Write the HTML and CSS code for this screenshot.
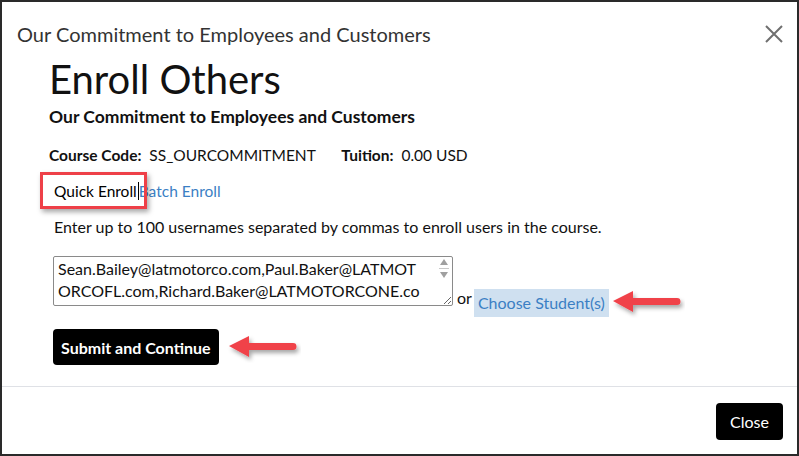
FILE: index.html
```html
<!DOCTYPE html>
<html lang="en">
<head>
    <meta charset="UTF-8">
    <meta name="viewport" content="width=device-width, initial-scale=1.0">
    <title>Enroll Others</title>
    <link rel="stylesheet" href="styles.css">
</head>
<body>
    <div class="modal">
        <div class="modal-header">
            <h4 class="modal-title">Our Commitment to Employees and Customers</h4>
            <span class="close-x">
                <svg width="18" height="18" viewBox="0 0 18 18"><path d="M1 1 L17 17 M17 1 L1 17" stroke="#6f6f6f" stroke-width="2" fill="none"/></svg>
            </span>
        </div>
        <div class="modal-body">
            <h1>Enroll Others</h1>
            <h2>Our Commitment to Employees and Customers</h2>
            <div class="course-info">
                <b>Course Code:</b>&nbsp; SS_OURCOMMITMENT
                <b class="tuition">Tuition:</b>&nbsp; 0.00 USD
            </div>
            <div class="tabs">
                <span class="tab active">Quick Enroll<span class="caret"></span></span><a class="tab" href="#">Batch Enroll</a>
                <span class="mark mark-box"></span>
            </div>
            <p class="hint">Enter up to 100 usernames separated by commas to enroll users in the course.</p>
            <div class="pick-row">
                <div class="users-wrap">
                    <textarea class="users" rows="2">Sean.Bailey@latmotorco.com,Paul.Baker@LATMOTORCOFL.com,Richard.Baker@LATMOTORCONE.com</textarea>
                    <span class="scroll-bar">
                        <svg width="10" height="8" viewBox="0 0 10 8"><path d="M1 7 L5 1 L9 7 Z" fill="#a0a0a0"/></svg>
                        <i class="scroll-line"></i>
                        <svg width="10" height="8" viewBox="0 0 10 8"><path d="M1 1 L5 7 L9 1 Z" fill="#a0a0a0"/></svg>
                    </span>
                </div>
                <span class="or">or</span>
                <a class="choose" href="#">Choose Student(s)</a>
                <svg class="mark arrow-a" width="76" height="30" viewBox="0 0 76 30"><use href="#arrow"/></svg>
            </div>
            <div class="submit-row">
                <button class="btn">Submit and Continue</button>
                <svg class="mark arrow-b" width="76" height="30" viewBox="0 0 76 30"><use href="#arrow"/></svg>
            </div>
        </div>
        <div class="modal-footer">
            <button class="btn btn-close">Close</button>
        </div>
    </div>

    <svg width="0" height="0" class="defs">
        <defs>
            <filter id="shade" x="-20%" y="-30%" width="150%" height="180%">
                <feDropShadow dx="2" dy="3" stdDeviation="2" flood-color="#000" flood-opacity="0.35"/>
            </filter>
            <g id="arrow" filter="url(#shade)">
                <path d="M4 13 L24 3 L24 10 L68 10 A3 3 0 0 1 68 17 L24 17 L24 24 Z" fill="#f0424a"/>
            </g>
        </defs>
    </svg>
</body>
</html>
```

FILE: styles.css
```css
body {
    margin: 0;
    font-family: Lato, "Liberation Sans", sans-serif;
    color: #111;
}

.modal {
    box-sizing: border-box;
    width: 799px;
    height: 456px;
    border: 2px solid #2a2a2a;
    background: #fff;
    display: flex;
    flex-direction: column;
}

.modal-header {
    display: flex;
    justify-content: space-between;
    align-items: center;
    padding: 20px 14px 0 15px;
}

.modal-title {
    margin: 0;
    font-size: 20px;
    font-weight: normal;
    color: #333;
}

.close-x {
    display: flex;
}

.modal-body {
    padding: 9px 0 0 47px;
    flex: 1;
    border-bottom: 1px solid #dfe1e6;
}

h1 {
    margin: 0;
    font-size: 40px;
    font-weight: normal;
    line-height: 48px;
}

h2 {
    margin: 3px 0 0;
    font-size: 17.5px;
    font-weight: bold;
}

.course-info {
    margin-top: 19px;
    font-size: 15.5px;
}

.tuition {
    margin-left: 22px;
}

.tabs {
    position: relative;
    margin-top: 18px;
    font-size: 15.5px;
    padding-left: 5px;
}

.tab {
    color: #3b7fc4;
    text-decoration: none;
}

.tab.active {
    color: #000;
}

.caret {
    display: inline-block;
    width: 1px;
    height: 18px;
    background: #000;
    vertical-align: -3px;
    margin-left: 1px;
}

.mark-box {
    position: absolute;
    left: -9px;
    top: -10px;
    width: 101px;
    height: 31px;
    border: 3px solid #ee4048;
    box-shadow: 2px 3px 5px rgba(0, 0, 0, 0.35);
}

.hint {
    margin: 17px 0 0 5px;
    font-size: 16px;
}

.pick-row {
    position: relative;
    display: flex;
    align-items: flex-end;
    margin: 20px 0 0 4px;
}

.users-wrap {
    position: relative;
    display: flex;
}

.users {
    box-sizing: border-box;
    width: 400px;
    height: 50px;
    font-family: inherit;
    font-size: 16px;
    line-height: 22px;
    padding: 1px 26px 1px 4px;
    border: 1px solid #8a8a8a;
    border-radius: 2px;
    resize: both;
    overflow: hidden;
    color: #111;
}

/* fake classic scrollbar inside the textarea */
.scroll-bar {
    position: absolute;
    right: 2px;
    top: 2px;
    width: 14px;
    height: 34px;
    display: flex;
    flex-direction: column;
    align-items: center;
    gap: 2px;
}

.scroll-line {
    width: 10px;
    height: 1px;
    background: #c8c8c8;
}

.or {
    font-size: 16px;
    margin: 0 2px -1px 4px;
}

.choose {
    font-size: 16px;
    color: #3b7fc4;
    text-decoration: none;
    background: #cfe0f0;
    padding: 4px 4px 5px;
    margin-bottom: -11px;
}

.arrow-a {
    position: absolute;
    left: 556px;
    top: 32px;
}

.submit-row {
    position: relative;
    margin: 23px 0 0 4px;
}

.btn {
    font-family: inherit;
    background: #000;
    color: #fff;
    border: none;
    border-radius: 4px;
    font-size: 16px;
    font-weight: bold;
    height: 36px;
    padding: 0 8px;
}

.arrow-b {
    position: absolute;
    left: 172px;
    top: 4px;
}

.modal-footer {
    display: flex;
    justify-content: flex-end;
    padding: 16px 14px 14px 0;
}

.btn-close {
    font-weight: normal;
    height: 37px;
    padding: 0 14px;
}

.defs {
    position: absolute;
}
```
